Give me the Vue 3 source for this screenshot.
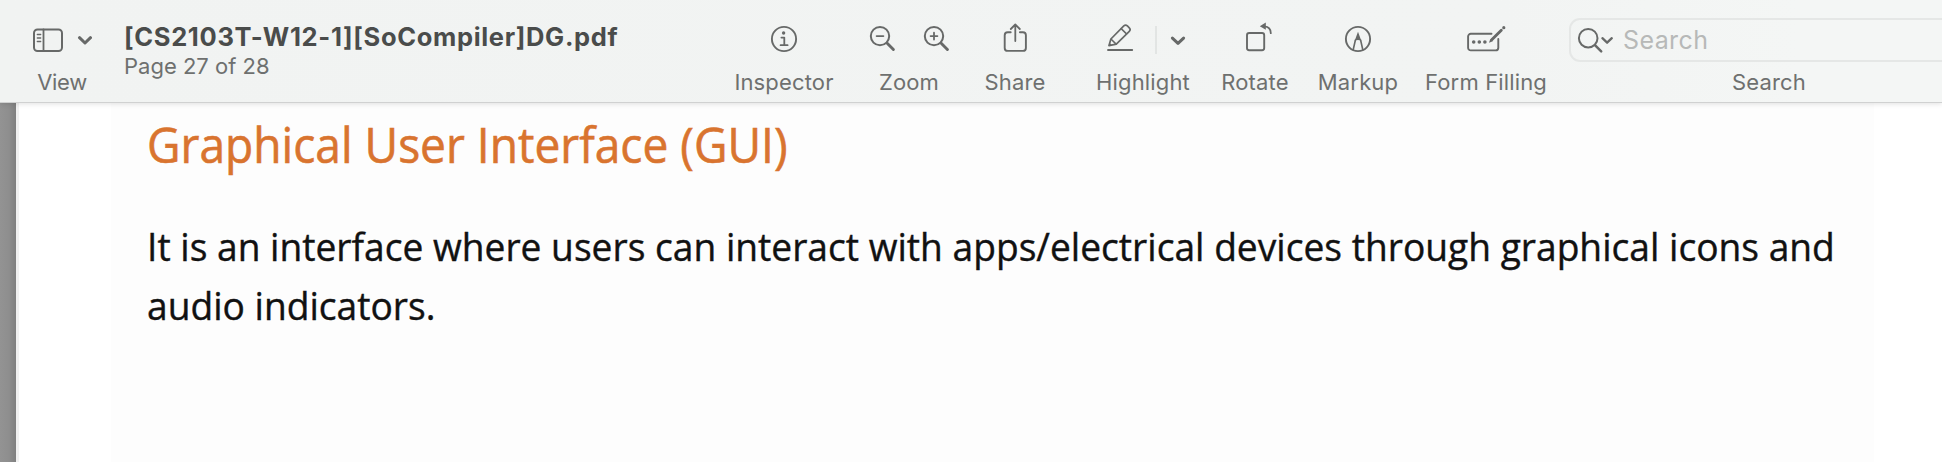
<script setup>
const dots = [1473.7, 1479.3, 1484.9]
</script>

<template>
  <div class="window">
    <header class="toolbar">
      <div class="tool view">
        <svg class="icon" width="60" height="40" viewBox="32 20 60 40">
          <rect x="34" y="29.5" width="28" height="21.5" rx="3.5" stroke-width="2" />
          <path d="M43.5 29.5V51" stroke-width="1.8" />
          <path d="M37.3 34.5h3.4M37.3 38h3.4M37.3 41.5h3.4" stroke-width="1.3" />
          <path d="M79.5 37.7l5.5 5.3 5.5-5.3" stroke-width="3" />
        </svg>
        <span class="label">View</span>
      </div>

      <div class="heading">
        <div class="file">[CS2103T-W12-1][SoCompiler]DG.pdf</div>
        <div class="pages">Page 27 of 28</div>
      </div>

      <div class="tool inspector">
        <svg class="icon" width="30" height="40" viewBox="769 20 30 40">
          <circle cx="784" cy="39" r="12.1" stroke-width="1.9" />
          <circle class="solid" cx="783.6" cy="33" r="1.7" />
          <path d="M781.4 37.6h2.9v7.4M780.6 45.2h7" stroke-width="1.8" />
        </svg>
        <span class="label">Inspector</span>
      </div>

      <div class="tool zoom">
        <svg class="icon" width="80" height="40" viewBox="869 20 80 40">
          <circle cx="880" cy="36.1" r="9.2" stroke-width="2" />
          <path d="M876.6 36.1h6.8" stroke-width="1.8" />
          <path d="M887.2 43.3l6.2 6.2" stroke-width="2.9" />
          <circle cx="934" cy="36.1" r="9.2" stroke-width="2" />
          <path d="M930.6 36.1h6.8M934 32.7v6.8" stroke-width="1.8" />
          <path d="M941.2 43.3l6.2 6.2" stroke-width="2.9" />
        </svg>
        <span class="label">Zoom</span>
      </div>

      <div class="tool share">
        <svg class="icon" width="30" height="40" viewBox="1000 20 30 40">
          <path d="M1010.7 32.3h-3a3 3 0 0 0-3 3v12.6a3 3 0 0 0 3 3h15.2a3 3 0 0 0 3-3V35.3a3 3 0 0 0-3-3h-3" stroke-width="1.9" />
          <path d="M1015.3 41V24.8M1010.8 29l4.5-4.5 4.5 4.5" stroke-width="1.8" />
        </svg>
        <span class="label">Share</span>
      </div>

      <div class="tool highlight">
        <svg class="icon" width="82" height="40" viewBox="1105 20 82 40">
          <path d="M1109 45.6l1.9-6.6 12.9-13.1q1.8-1.7 3.6 0l1.9 1.9q1.7 1.8 0 3.5l-13 12.9z" stroke-width="1.7" />
          <path d="M1121.2 28.6l5.3 5.3M1111.2 39.3l4.9 4.8" stroke-width="1.5" />
          <path class="solid" d="M1108.6 46l.8-3.3 2.4 2.4z" />
          <path d="M1108 50h24.2" stroke-width="1.9" />
          <path class="divider" d="M1156 26v28" stroke-width="1.7" />
          <path d="M1172.4 38.1l5.6 5.3 5.6-5.3" stroke-width="3" />
        </svg>
        <span class="label">Highlight</span>
      </div>

      <div class="tool rotate">
        <svg class="icon" width="30" height="40" viewBox="1243 20 30 40">
          <rect x="1247" y="33" width="17.2" height="17.2" rx="2.2" stroke-width="1.9" />
          <path class="solid" d="M1259.8 26.2l6-3.6v7.2z" />
          <path d="M1264.5 26.4q6.2.4 6.3 6.8" stroke-width="1.8" />
        </svg>
        <span class="label">Rotate</span>
      </div>

      <div class="tool markup">
        <svg class="icon" width="30" height="40" viewBox="1343 20 30 40">
          <circle cx="1358" cy="39" r="12.1" stroke-width="1.9" />
          <path class="solid" d="M1358 31.8l3.3 9q-3.3-1.8-6.6 0z" />
          <path d="M1355.4 40l-2.2 9.8M1360.6 40l2.2 9.8" stroke-width="1.6" />
        </svg>
        <span class="label">Markup</span>
      </div>

      <div class="tool form">
        <svg class="icon" width="44" height="40" viewBox="1464 20 44 40">
          <path d="M1491.5 33.8h-20.7a2.7 2.7 0 0 0-2.7 2.7v11.2a2.7 2.7 0 0 0 2.7 2.7h24.8a2.7 2.7 0 0 0 2.7-2.7V39" stroke-width="1.9" />
          <circle v-for="x in dots" :key="x" class="solid" :cx="x" cy="42" r="1.8" />
          <path d="M1501.3 30.2l-9.3 9.3" stroke-width="2.9" />
          <path class="solid" d="M1489 42.7l1.4-4 2.5 2.5z" />
          <circle class="solid" cx="1503.8" cy="27.7" r="1.6" />
        </svg>
        <span class="label">Form Filling</span>
      </div>

      <div class="tool search">
        <div class="field">
          <svg class="icon" width="40" height="40" viewBox="1576 20 40 40">
            <circle cx="1588.2" cy="38.2" r="9.3" stroke-width="2" />
            <path d="M1595.2 45.4l6 6" stroke-width="2.5" />
            <path d="M1602.4 38.2l4.7 4.5 4.7-4.5" stroke-width="2.3" />
          </svg>
          <span class="placeholder">Search</span>
        </div>
        <span class="label">Search</span>
      </div>
    </header>

    <main class="viewer">
      <article class="page">
        <section class="content">
          <h1>Graphical User Interface (GUI)</h1>
          <p>
            It is an interface where users can interact with apps/electrical devices through graphical icons and<br />
            audio indicators.
          </p>
        </section>
      </article>
    </main>
  </div>
</template>

<style>
body {
  overflow: hidden;
}
</style>

<style scoped>
.window {
  width: 1942px;
  height: 462px;
  display: flex;
  flex-direction: column;
  overflow: hidden;
  background: #fff;
}

.toolbar {
  flex: none;
  position: relative;
  z-index: 1;
  box-sizing: border-box;
  height: 103px;
  display: flex;
  align-items: flex-start;
  background: linear-gradient(90deg, #f1f3f2 0, #f2f4f3 1500px, #f4f6f5 1800px);
  border-bottom: 1px solid #d0d1d1;
  box-shadow: 0 1px 5px rgba(0, 0, 0, 0.12);
  font-family: Inter, "Liberation Sans", sans-serif;
  color: #6e706f;
}

.tool {
  flex: none;
  display: flex;
  flex-direction: column;
  align-items: center;
  padding-top: 20px;
}

.icon {
  flex: none;
  display: block;
  fill: none;
  stroke: #676968;
  stroke-linecap: round;
  stroke-linejoin: round;
}

.solid {
  fill: #676968;
  stroke: none;
}

.divider {
  stroke: #e0e2e1;
  stroke-linecap: butt;
}

.label {
  margin-top: 7px;
  font-size: 22px;
  line-height: 30px;
  letter-spacing: 0.15px;
  white-space: nowrap;
}

.view {
  width: 60px;
  margin-left: 32px;
}

.view .label {
  letter-spacing: -0.3px;
}

.heading {
  flex: none;
  width: 500px;
  margin-left: 32px;
  padding-top: 22px;
  white-space: nowrap;
}

.file {
  font-size: 25.5px;
  font-weight: 700;
  line-height: 30px;
  letter-spacing: 0.66px;
  color: #4a4c4b;
}

.pages {
  font-size: 22px;
  line-height: 28px;
}

.inspector {
  width: 110px;
  margin-left: 105px;
}

.zoom {
  width: 80px;
  margin-left: 30px;
}

.share {
  width: 70px;
  margin-left: 31px;
}

.highlight {
  width: 82px;
  margin-left: 55px;
}

.highlight .label {
  margin-left: -6px;
}

.rotate {
  width: 80px;
  margin-left: 28px;
}

.rotate .icon {
  margin-left: 6px;
}

.markup {
  width: 90px;
  margin-left: 18px;
}

.form {
  width: 130px;
  margin-left: 18px;
}

.search {
  width: 400px;
  margin-left: 18px;
  padding-top: 18px;
}

.field {
  box-sizing: border-box;
  width: 400px;
  height: 44px;
  display: flex;
  align-items: center;
  padding-left: 5px;
  border: 2px solid #e5e7e6;
  border-radius: 11px;
}

.placeholder {
  margin-left: 7px;
  font-size: 25px;
  letter-spacing: 0.4px;
  line-height: 30px;
  color: #b7b9b8;
}

.search .label {
  margin-top: 5px;
}

.viewer {
  flex: 1;
  display: flex;
  background: linear-gradient(90deg, #939393 0, #8e8e8e 9px, #808080 16px);
}

.page {
  flex: none;
  box-sizing: border-box;
  width: 1926px;
  margin-left: 16px;
  padding-left: 92px;
  border-left: 3px solid #f1f1f1;
  background: #fff;
}

.content {
  box-sizing: border-box;
  width: 1763px;
  height: 100%;
  padding: 11px 0 0 36px;
  background: #fdfdfd;
  font-family: "Open Sans", "Noto Sans", sans-serif;
}

h1,
p {
  margin: 0;
  font-weight: 400;
  white-space: nowrap;
  transform-origin: 0 0;
}

h1 {
  font-size: 48.5px;
  line-height: 60px;
  color: #d9742f;
  -webkit-text-stroke: 0.6px #d9742f;
  transform: scaleX(0.951);
}

p {
  margin-top: 43px;
  font-size: 38.5px;
  line-height: 59px;
  color: #111;
  -webkit-text-stroke: 0.4px #111;
  transform: scaleX(0.965);
}
</style>
